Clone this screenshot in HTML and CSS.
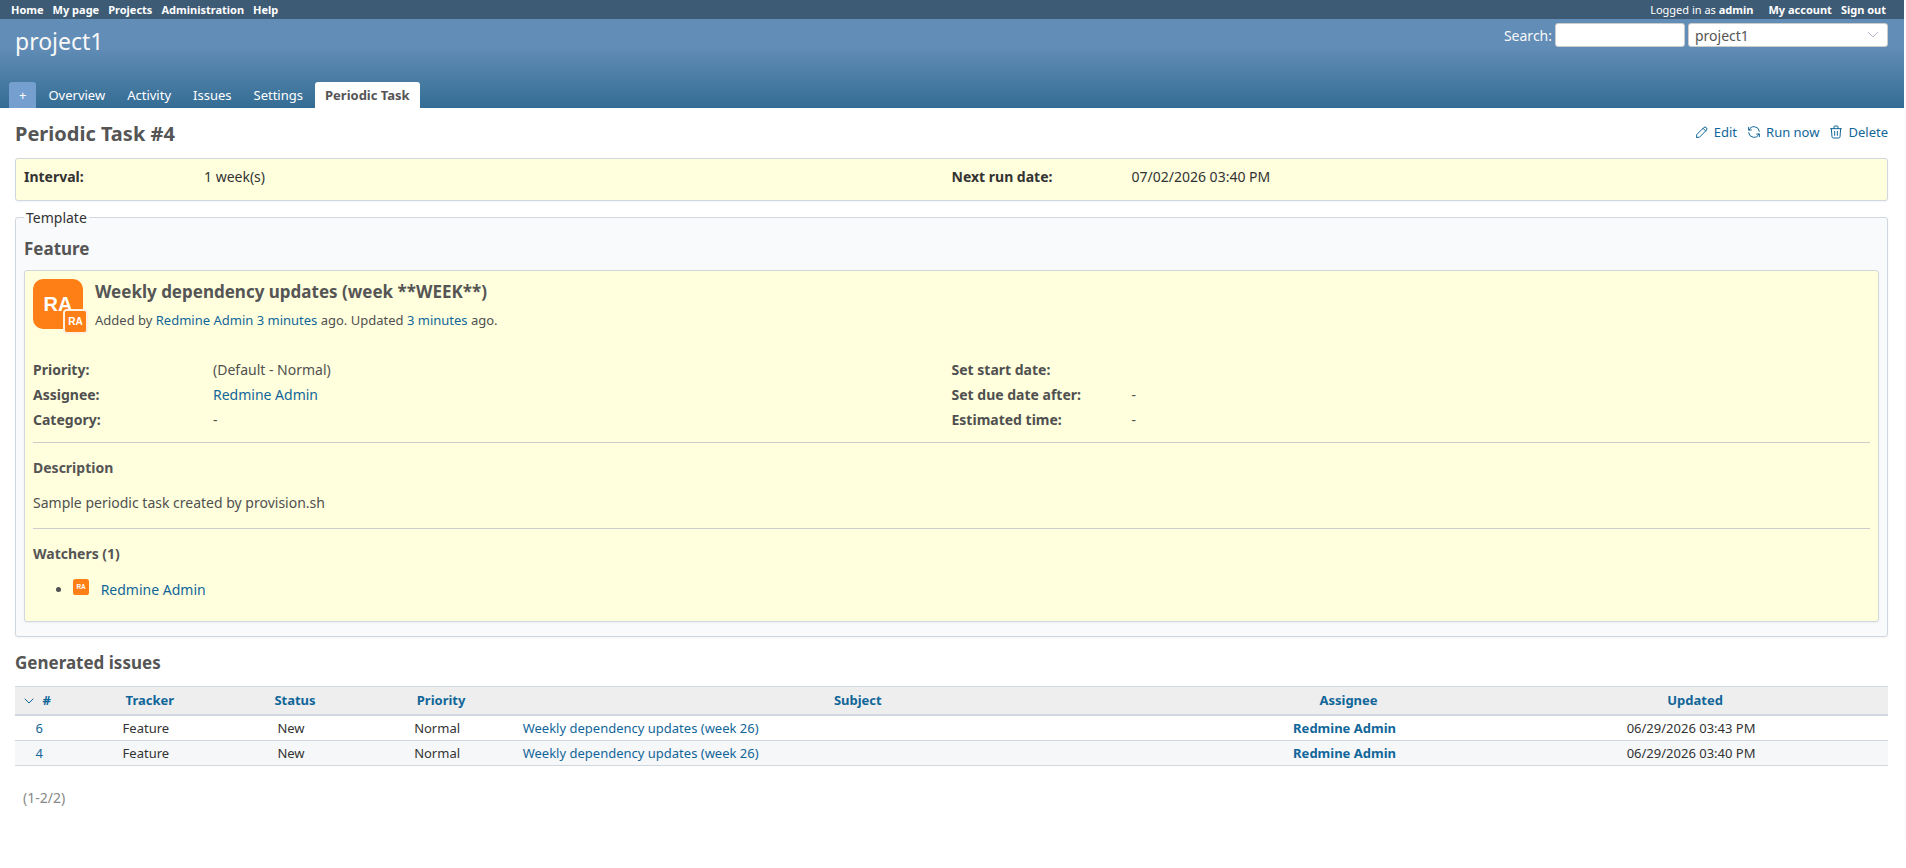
FILE: index.html
```
<!DOCTYPE html>
<html lang="en">
<head>
    <meta charset="UTF-8">
    <meta name="viewport" content="width=device-width, initial-scale=1.0">
    <title>Periodic Task #4 - project1 - Redmine</title>
    <link rel="stylesheet" href="styles.css">
</head>
<body>
    <nav class="top-menu">
        <ul>
            <li><a href="#">Home</a></li>
            <li><a href="#">My page</a></li>
            <li><a href="#">Projects</a></li>
            <li><a href="#">Administration</a></li>
            <li><a href="#">Help</a></li>
        </ul>
        <div class="account">
            <span class="loggedas">Logged in as <a href="#">admin</a></span>
            <ul>
                <li><a href="#">My account</a></li>
                <li><a href="#">Sign out</a></li>
            </ul>
        </div>
    </nav>

    <header class="header">
        <div class="header-row">
            <h1>project1</h1>
            <form class="quick-search">
                <label for="q">Search:</label>
                <input type="text" id="q" name="q">
                <div class="project-jump">
                    <select id="project" aria-label="Project">
                        <option>project1</option>
                    </select>
                    <svg class="jump-arrow" viewBox="0 0 12 7"><path d="M1 1l5 5 5-5"/></svg>
                </div>
            </form>
        </div>
        <nav class="main-menu">
            <a href="#" class="new-object">+</a>
            <a href="#">Overview</a>
            <a href="#">Activity</a>
            <a href="#">Issues</a>
            <a href="#">Settings</a>
            <a href="#" class="selected">Periodic Task</a>
        </nav>
    </header>

    <main class="content">
        <div class="title-row">
            <h2>Periodic Task #4</h2>
            <div class="contextual">
                <a href="#">
                    <svg class="icon" viewBox="0 0 24 24"><path d="M4 20h4l10.500 -10.500a2.828 2.828 0 1 0 -4 -4l-10.500 10.500v4"/><path d="M13.500 6.500l4 4"/></svg>
                    Edit
                </a>
                <a href="#">
                    <svg class="icon" viewBox="0 0 24 24"><path d="M20 11a8.100 8.100 0 0 0 -15.500 -2m-.5 -4v4h4"/><path d="M4 13a8.100 8.100 0 0 0 15.500 2m.5 4v-4h-4"/></svg>
                    Run now
                </a>
                <a href="#">
                    <svg class="icon" viewBox="0 0 24 24"><path d="M4 7h16"/><path d="M10 11v6"/><path d="M14 11v6"/><path d="M5 7l1 12a2 2 0 0 0 2 2h8a2 2 0 0 0 2 -2l1 -12"/><path d="M9 7v-3a1 1 0 0 1 1 -1h4a1 1 0 0 1 1 1v3"/></svg>
                    Delete
                </a>
            </div>
        </div>

        <div class="box summary">
            <dl class="attributes">
                <div><dt>Interval:</dt><dd>1 week(s)</dd></div>
                <div><dt>Next run date:</dt><dd>07/02/2026 03:40 PM</dd></div>
            </dl>
        </div>

        <fieldset class="template">
            <legend>Template</legend>
            <h3>Feature</h3>
            <div class="box issue">
                <div class="issue-head">
                    <div class="avatars">
                        <svg class="avatar author" viewBox="0 0 50 50"><rect width="50" height="50" rx="10"/><text x="25" y="32">RA</text></svg>
                        <svg class="avatar assigned" viewBox="0 0 50 50"><rect width="50" height="50" rx="5"/><text x="25" y="33">RA</text></svg>
                    </div>
                    <div>
                        <h3>Weekly dependency updates (week **WEEK**)</h3>
                        <p class="author-line">Added by <a href="#">Redmine Admin</a> <a href="#">3 minutes</a> ago. Updated <a href="#">3 minutes</a> ago.</p>
                    </div>
                </div>
                <dl class="attributes">
                    <div><dt>Priority:</dt><dd>(Default - Normal)</dd></div>
                    <div><dt>Set start date:</dt><dd></dd></div>
                    <div><dt>Assignee:</dt><dd><a href="#">Redmine Admin</a></dd></div>
                    <div><dt>Set due date after:</dt><dd>-</dd></div>
                    <div><dt>Category:</dt><dd>-</dd></div>
                    <div><dt>Estimated time:</dt><dd>-</dd></div>
                </dl>
                <hr>
                <h4>Description</h4>
                <p>Sample periodic task created by provision.sh</p>
                <hr>
                <h4>Watchers (1)</h4>
                <ul class="watchers">
                    <li>
                        <svg class="avatar" viewBox="0 0 50 50"><rect width="50" height="50" rx="8"/><text x="25" y="32">RA</text></svg>
                        <a href="#">Redmine Admin</a>
                    </li>
                </ul>
            </div>
        </fieldset>

        <h3>Generated issues</h3>
        <table class="issues">
            <colgroup>
                <col class="col-id">
                <col class="col-tracker">
                <col class="col-status">
                <col class="col-priority">
                <col class="col-subject">
                <col class="col-assignee">
                <col class="col-updated">
            </colgroup>
            <thead>
                <tr>
                    <th class="sorted"><a href="#"><svg class="icon" viewBox="0 0 24 24"><path d="M6 9l6 6l6 -6"/></svg>#</a></th>
                    <th><a href="#">Tracker</a></th>
                    <th><a href="#">Status</a></th>
                    <th><a href="#">Priority</a></th>
                    <th><a href="#">Subject</a></th>
                    <th><a href="#">Assignee</a></th>
                    <th><a href="#">Updated</a></th>
                </tr>
            </thead>
            <tbody>
                <tr>
                    <td><a href="#">6</a></td>
                    <td>Feature</td>
                    <td>New</td>
                    <td>Normal</td>
                    <td class="subject"><a href="#">Weekly dependency updates (week 26)</a></td>
                    <td class="assigned-to"><a href="#">Redmine Admin</a></td>
                    <td>06/29/2026 03:43 PM</td>
                </tr>
                <tr>
                    <td><a href="#">4</a></td>
                    <td>Feature</td>
                    <td>New</td>
                    <td>Normal</td>
                    <td class="subject"><a href="#">Weekly dependency updates (week 26)</a></td>
                    <td class="assigned-to"><a href="#">Redmine Admin</a></td>
                    <td>06/29/2026 03:40 PM</td>
                </tr>
            </tbody>
        </table>
        <p class="pagination">(1-2/2)</p>
    </main>
</body>
</html>
```
FILE: styles.css
```
* {
    box-sizing: border-box;
    margin: 0;
    padding: 0;
}

body {
    border-right: 2px solid #fafafa;
    background: #fff;
    color: #333;
    font-family: "Noto Sans", sans-serif;
    font-size: 14px;
    line-height: 19px;
}

a {
    color: #169;
    text-decoration: none;
}

a:hover {
    text-decoration: underline;
}

ul {
    list-style: none;
}

h2, h3, h4 {
    color: #555;
}

h2 {
    font-size: 20px;
    line-height: 28px;
}

h3 {
    font-size: 17px;
    line-height: 24px;
}

h4 {
    font-size: 14px;
    line-height: 19px;
}

/* top menu */
.top-menu {
    display: flex;
    justify-content: space-between;
    padding: 0 18px 0 11px;
    background: #3e5b76;
    color: #fff;
    font-size: 11px;
    line-height: 19px;
}

.top-menu ul,
.top-menu .account {
    display: flex;
    gap: 9px;
}

.top-menu .account {
    gap: 15px;
}

.top-menu a {
    color: #fff;
    font-weight: bold;
}

/* header */
.header {
    display: flex;
    flex-direction: column;
    justify-content: space-between;
    min-height: 89px;
    padding: 4px 16px 0 15px;
    background: linear-gradient(#628db6 30%, #346d94);
    color: #f8f8f8;
}

.header-row {
    display: flex;
    justify-content: space-between;
    align-items: flex-start;
}

.header h1 {
    font-size: 23px;
    font-weight: normal;
    line-height: 36px;
}

.quick-search {
    display: flex;
    align-items: center;
    gap: 3px;
}

.quick-search input,
.quick-search select {
    height: 24px;
    border: 1px solid #ccc;
    border-radius: 3px;
    background: #fff;
    color: #555;
    font: inherit;
}

.quick-search input {
    width: 130px;
    padding: 0 6px;
}

.project-jump {
    position: relative;
}

.quick-search select {
    display: block;
    width: 200px;
    padding: 0 6px;
    appearance: none;
}

.jump-arrow {
    position: absolute;
    top: 8px;
    right: 9px;
    width: 12px;
    height: 7px;
    fill: none;
    stroke: #bbbbd4;
    pointer-events: none;
}

.main-menu {
    display: flex;
    gap: 2px;
    margin-left: -6px;
}

.main-menu a {
    padding: 0 10px;
    border-radius: 3px 3px 0 0;
    color: #fff;
    font-size: 13px;
    line-height: 26px;
}

.main-menu .new-object {
    background: #759fcf;
}

.main-menu .selected {
    background: #fff;
    color: #555;
    font-weight: bold;
}

/* content */
.content {
    padding: 12px 16px 12px 15px;
}

.title-row {
    display: flex;
    justify-content: space-between;
    align-items: flex-start;
    margin-bottom: 10px;
}

.contextual {
    display: flex;
    gap: 9px;
    font-size: 13px;
    line-height: 24px;
}

.contextual a {
    display: flex;
    align-items: center;
    gap: 4px;
}

.icon {
    width: 16px;
    height: 16px;
    fill: none;
    stroke: #169;
    stroke-width: 1.5;
    stroke-linecap: round;
    stroke-linejoin: round;
}

.box {
    border: 1px solid #d0d7de;
    border-radius: 3px;
    background: #ffffdd;
    box-shadow: 0 1px 2px rgba(0, 0, 0, 0.05);
}

.summary {
    padding: 8px 8px 14px;
}

.attributes {
    display: grid;
    grid-template-columns: 1fr 1fr;
    row-gap: 6px;
}

.attributes div {
    display: flex;
}

.attributes dt {
    width: 180px;
    font-weight: bold;
}

.template {
    margin: 7px 0 14px;
    padding: 10px 8px 14px;
    border: 1px solid #d0d7de;
    border-radius: 3px;
    background: #f9fafc;
    box-shadow: 0 1px 2px rgba(0, 0, 0, 0.05);
}

.template legend {
    padding: 0 2px;
}

.issue {
    margin-top: 9px;
    padding: 8px 8px 22px;
    color: #505050;
}

.issue-head {
    display: flex;
    gap: 12px;
    margin-bottom: 30px;
}

.issue-head h3 {
    line-height: 26px;
}

.avatars {
    position: relative;
    width: 50px;
    height: 50px;
}

.avatar {
    width: 16px;
    height: 16px;
    fill: #ff7f17;
}

.avatar text {
    fill: #fff;
    font-family: "Liberation Sans", sans-serif;
    font-size: 20px;
    font-weight: bold;
    text-anchor: middle;
}

.avatar.author {
    display: block;
    width: 50px;
    height: 50px;
}

.avatar.assigned {
    position: absolute;
    right: -5px;
    bottom: -5px;
    width: 25px;
    height: 25px;
    border: 2px solid #fff0e0;
    border-radius: 4px;
    background: #ff7f17;
}

.avatar.assigned text {
    font-size: 24px;
}

.author-line {
    margin-top: 6px;
    font-size: 13px;
}

.issue hr {
    margin: 13px 0 15px;
    border: 0;
    border-top: 1px solid #ccc;
}

.issue h4 {
    margin-bottom: 16px;
}

.issue p + hr {
    margin-top: 16px;
}

.watchers {
    padding-left: 40px;
    list-style: disc;
}

.watchers .avatar {
    margin-right: 8px;
}

/* issue list */
.issues {
    width: 100%;
    margin-top: 11px;
    border-collapse: collapse;
    table-layout: fixed;
    font-size: 13px;
    line-height: 18px;
    text-align: center;
}

.col-id { width: 3%; }
.col-tracker { width: 8.4%; }
.col-status { width: 7.1%; }
.col-priority { width: 8.5%; }
.col-subject { width: 36%; }
.col-assignee { width: 16.4%; }

.issues th {
    padding: 4px;
    border-top: 1px solid #d0d7de;
    border-bottom: 2px solid #d0d7de;
    background: #eee;
    line-height: 19px;
}

.issues .sorted {
    padding: 4px 14px 4px 0;
}

.issues .sorted a {
    display: flex;
    justify-content: center;
    align-items: center;
    gap: 5px;
}

.issues td {
    padding: 3px 10px 3px 2px;
    border-bottom: 1px solid #d0d7de;
}

.issues tbody tr:nth-child(even) {
    background: #f6f7f9;
}

.issues .subject {
    text-align: left;
}

.issues .assigned-to {
    font-weight: bold;
}

.pagination {
    margin: 22px 8px;
    color: #888;
}
```
